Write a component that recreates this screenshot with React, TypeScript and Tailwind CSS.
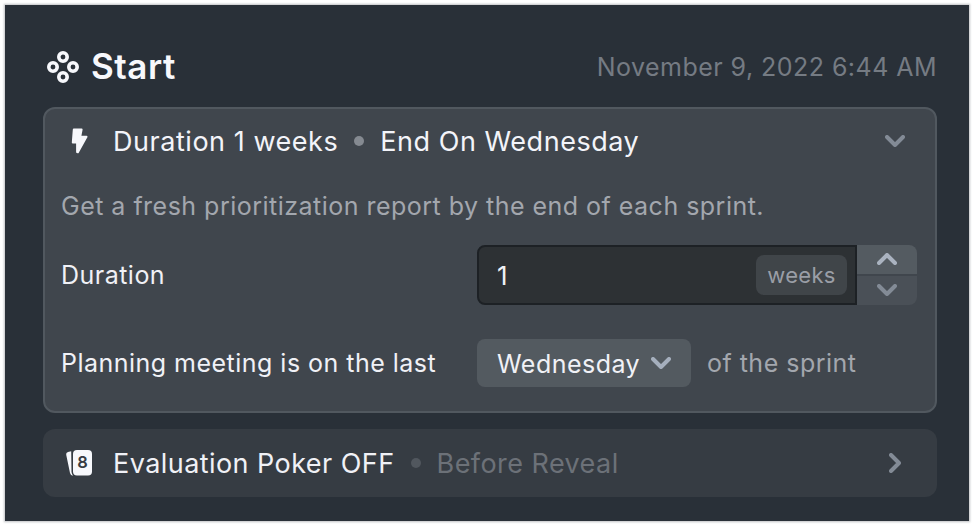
import clsx from "clsx";

export default function App() {
  return (
    <main className="h-[526px] w-[974px] bg-white p-[5px] font-['Inter',sans-serif]">
      <div className="h-[516px] w-[964px] bg-[#293038] pl-[38px] pr-8 pt-[38px] shadow-[0_0_2px_1px_rgba(41,48,56,0.3)]">
        <header className="flex h-12 items-center">
          <StepsIcon />
          <h1 className="ml-3 pb-0.5 text-[35px] font-semibold leading-none tracking-[0.5px] text-[#f7f8fc]">
            Start
          </h1>
          <time className="ml-auto pt-0.5 text-[25px] tracking-[0.46px] text-[#757b83]">
            November 9, 2022 6:44 AM
          </time>
        </header>

        <section className="mt-4 h-[306px] rounded-xl border-2 border-[#51585f] bg-[#40464d]">
          <div className="flex h-16 items-center pl-5 pr-[30px] text-[27px] tracking-[0.54px] text-[#f3f4f9]">
            <span className="w-12 pl-[6px]">
              <BoltIcon />
            </span>
            <span className="pt-0.5">Duration 1 weeks</span>
            <Dot className="bg-[#858a91]" />
            <span className="pt-0.5">End On Wednesday</span>
            <Chevron className="ml-auto text-[#838b96]" />
          </div>

          <div className="px-4 tracking-[0.48px]">
            <p className="flex h-[66px] items-center pt-0.5 text-[25px] text-[#a3a7ae]">
              Get a fresh prioritization report by the end of each sprint.
            </p>

            <div className="mt-[6px] flex h-[60px] items-center">
              <label
                htmlFor="duration"
                className="w-[416px] pt-0.5 text-[25px] text-[#f0f1f6]"
              >
                Duration
              </label>
              <div className="flex h-[60px] w-[380px] items-center rounded-l-lg border-2 border-[#1d2125] bg-[#2d3134] pl-[18px] pr-2">
                <input
                  id="duration"
                  type="text"
                  defaultValue="1"
                  className="w-0 grow bg-transparent text-[26px] text-[#f0f1f6] focus:outline-none"
                />
                <span className="flex h-10 w-[91px] items-center justify-center rounded-lg bg-[#404549] text-[22px] tracking-[0.3px] text-[#9a9ea6]">
                  weeks
                </span>
              </div>
              <div className="flex h-[60px] w-[60px] flex-col overflow-hidden rounded-r-lg">
                <button
                  type="button"
                  aria-label="Increase"
                  className="flex h-[31px] items-center justify-center border-b-2 border-[#40464d] bg-[#545b61] pb-0.5"
                >
                  <Chevron className="rotate-180 text-[#aab3c0]" />
                </button>
                <button
                  type="button"
                  aria-label="Decrease"
                  className="flex h-[29px] items-center justify-center bg-[#4a5057] pb-0.5"
                >
                  <Chevron className="text-[#838b96]" />
                </button>
              </div>
            </div>

            <div className="mt-[34px] flex h-12 items-center text-[25px] text-[#f0f1f6]">
              <span className="w-[416px] pt-0.5">Planning meeting is on the last</span>
              <button
                type="button"
                className="flex h-12 w-[214px] items-center justify-between rounded-lg bg-[#535a60] px-5"
              >
                <span className="pt-1">Wednesday</span>
                <Chevron className="text-[#a5afbd]" />
              </button>
              <span className="ml-4 pt-0.5 text-[#a3a7ae]">of the sprint</span>
            </div>
          </div>
        </section>

        <section className="mt-4 flex h-[68px] items-center rounded-xl bg-[#363c43] pl-[22px] pr-8 text-[27px] tracking-[0.44px] text-[#f0f1f6]">
          <span className="w-12">
            <CardsIcon />
          </span>
          <span className="pt-0.5">Evaluation Poker OFF</span>
          <Dot className="bg-[#51575e]" />
          <span className="pt-0.5 text-[#6c7178]">Before Reveal</span>
          <Chevron className="ml-auto -rotate-90 text-[#838b96]" />
        </section>
      </div>
    </main>
  );
}

function Dot({ className }: { className: string }) {
  return <span className={clsx("mx-4 size-[10px] rounded-full", className)} />;
}

function Chevron({ className }: { className?: string }) {
  return (
    <svg
      width="20"
      height="12"
      viewBox="0 0 20 12"
      fill="none"
      stroke="currentColor"
      strokeWidth="4"
      strokeLinecap="round"
      strokeLinejoin="round"
      aria-hidden="true"
      className={clsx("shrink-0", className)}
    >
      <path d="M2 2l8 8 8-8" />
    </svg>
  );
}

function StepsIcon() {
  return (
    <svg
      width="32"
      height="32"
      viewBox="0 0 32 32"
      fill="none"
      stroke="#f7f8fc"
      strokeWidth="3.6"
      aria-hidden="true"
      className="ml-1 shrink-0"
    >
      <circle cx="16" cy="6" r="4.2" />
      <circle cx="6" cy="16" r="4.2" />
      <circle cx="26" cy="16" r="4.2" />
      <circle cx="16" cy="26" r="4.2" />
    </svg>
  );
}

function BoltIcon() {
  return (
    <svg
      width="18"
      height="28"
      viewBox="0 0 18 28"
      fill="#f7f8fc"
      stroke="#f7f8fc"
      strokeWidth="2"
      strokeLinejoin="round"
      aria-hidden="true"
    >
      <path d="M2.800 2.500H10.600L9.200 9.700H15.500L6.900 25.300L6.100 25.100V15.600H1.800z" />
    </svg>
  );
}

function CardsIcon() {
  return (
    <svg width="28" height="28" viewBox="0 0 28 28" aria-hidden="true">
      <path
        d="M6.200 2.200L3 3Q.8 3.600 1.200 5.800L5 24q.5 2.400 3.200 2.800Q6.800 25.500 6.500 23z"
        fill="#f7f8fc"
      />
      <rect x="8" y="1" width="19" height="25.500" rx="4" fill="#f7f8fc" />
      <text
        x="17.500"
        y="19.300"
        textAnchor="middle"
        fontSize="16.500"
        fontWeight="600"
        letterSpacing="0"
        fill="#363c43"
      >
        8
      </text>
    </svg>
  );
}
